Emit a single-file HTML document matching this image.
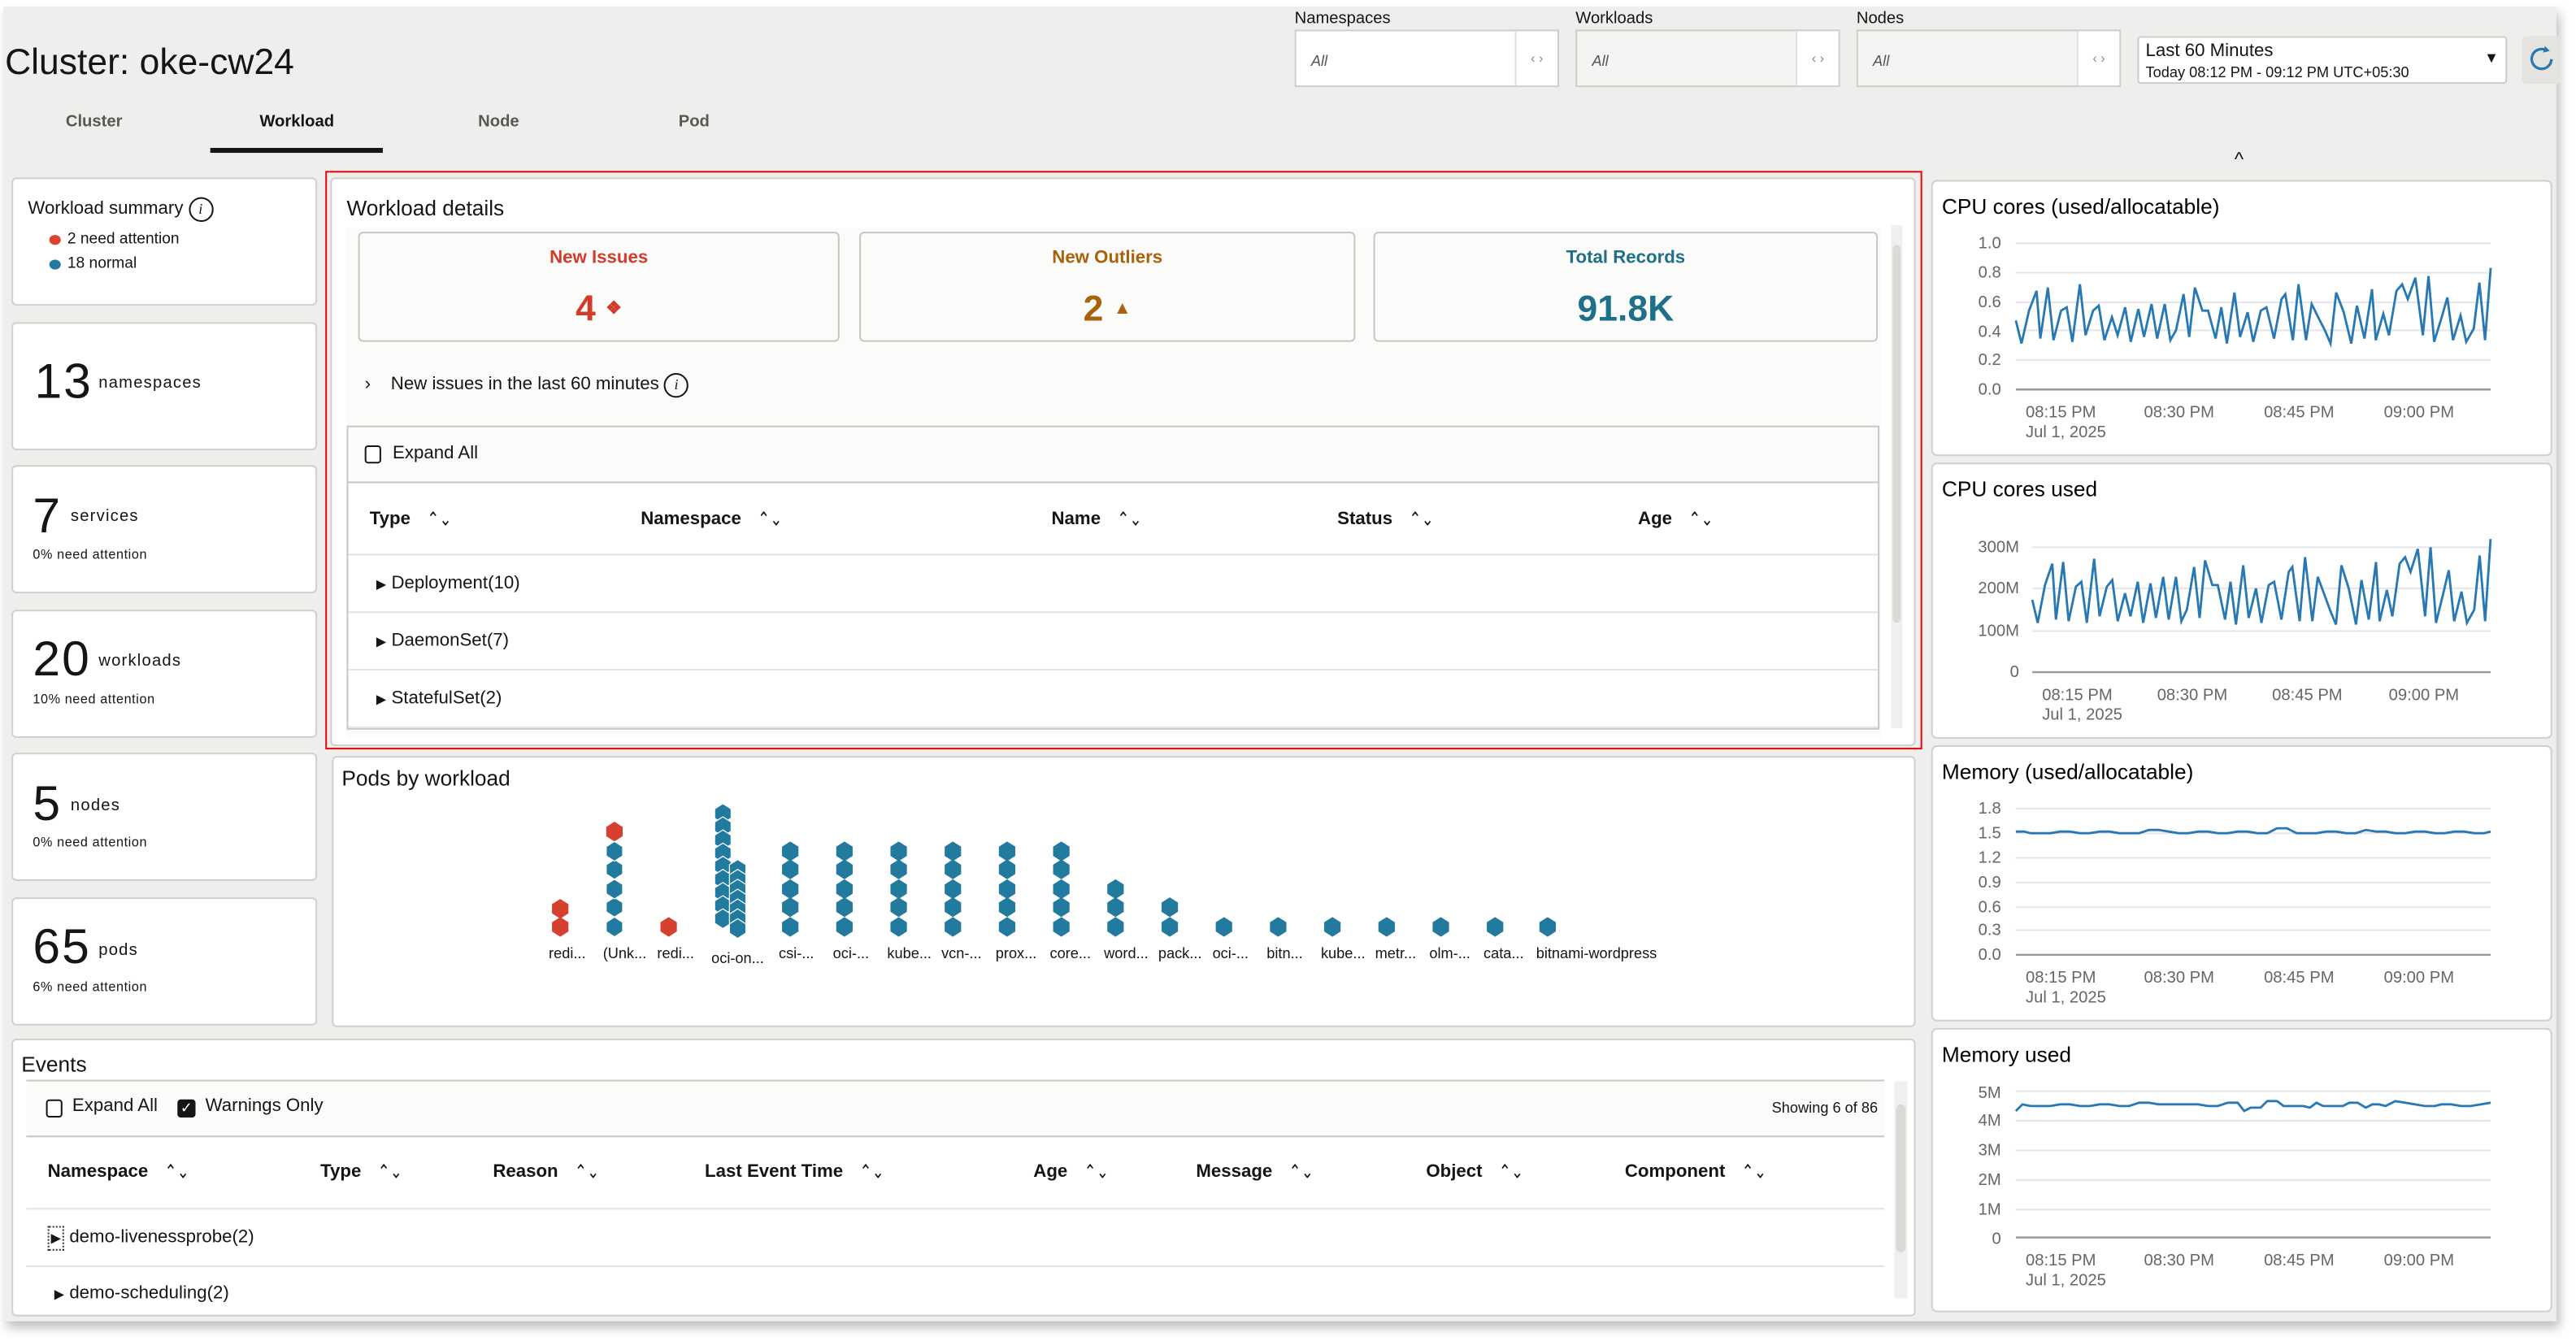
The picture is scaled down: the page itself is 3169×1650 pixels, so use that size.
<!DOCTYPE html>
<html><head><meta charset="utf-8">
<style>
*{box-sizing:border-box;margin:0;padding:0}
html,body{width:3169px;height:1650px;overflow:hidden;background:#fff;font-family:"Liberation Sans",Arial,sans-serif;color:#161513}
#w{position:absolute;left:0;top:0;width:1568px;height:816px;transform-origin:0 0;transform:scale(2.0211,2.0221)}
.bg{position:absolute;left:2px;top:4px;width:1554px;height:800px;background:#efeeec;box-shadow:2px 4px 6px rgba(0,0,0,.25)}
.a{position:absolute}
.card{position:absolute;background:#fff;border:1px solid #d2d0cc;border-radius:3px}
.t{position:absolute;white-space:nowrap}
.lbl{font-size:10px}
.fbox{position:absolute;height:35px;background:#f5f4f2;border:1px solid #cfcdc9;font-size:9px;font-style:italic;color:#555}
.fbox .sp{position:absolute;right:0;top:0;width:26px;height:100%;background:#fff;border-left:1px solid #ddd;font-size:8px;font-style:normal;color:#888;text-align:center;line-height:33px}
.tab{font-size:10px;font-weight:bold;color:#5a5854}
.big{font-size:30px;letter-spacing:1px}
.small{font-size:8px;letter-spacing:.3px}
.unit{font-size:10px;letter-spacing:.6px}
.th{font-size:11px;font-weight:bold}
.sort{font-size:9px;font-weight:normal;margin-left:10px;display:inline-block;transform:scaleY(1.3)}
.row{position:absolute;left:0;right:0;border-top:1px solid #e5e3e0}
.ax{font-size:10px;fill:#666;font-family:"Liberation Sans",Arial,sans-serif}
</style></head><body>
<div id="w">
<div class="bg"></div>
<div class="t" style="left:3px;top:25px;font-size:22px">Cluster: oke-cw24</div>
<div class="t tab" style="left:40px;top:69px">Cluster</div>
<div class="t tab" style="left:158px;top:69px;color:#161513">Workload</div>
<div class="t tab" style="left:291px;top:69px">Node</div>
<div class="t tab" style="left:413px;top:69px">Pod</div>
<div class="a" style="left:128px;top:90px;width:105px;height:3px;background:#161513"></div>

<div class="t lbl" style="left:788px;top:6px">Namespaces</div>
<div class="fbox" style="left:788px;top:18px;width:161px;background:#fff"><span class="t" style="left:9px;top:13px">All</span><div class="sp">‹ ›</div></div>
<div class="t lbl" style="left:959px;top:6px">Workloads</div>
<div class="fbox" style="left:959px;top:18px;width:161px"><span class="t" style="left:9px;top:13px">All</span><div class="sp">‹ ›</div></div>
<div class="t lbl" style="left:1130px;top:6px">Nodes</div>
<div class="fbox" style="left:1130px;top:18px;width:161px"><span class="t" style="left:9px;top:13px">All</span><div class="sp">‹ ›</div></div>
<div class="a" style="left:1301px;top:22px;width:225px;height:29px;background:#fff;border:1px solid #cfcdc9;border-radius:2px">
<div class="t" style="left:4px;top:2px;font-size:11px">Last 60 Minutes</div>
<div class="t" style="left:4px;top:16px;font-size:9px">Today 08:12 PM - 09:12 PM UTC+05:30</div>
<div class="t" style="right:4px;top:7px;font-size:9px">▼</div></div>
<div class="a" style="left:1535px;top:22px;width:24px;height:29px;background:#e4e3e0;border-radius:3px"><svg width="24" height="29"><path d="M18 14a6 6 0 1 1-2.5-5" fill="none" stroke="#2878b4" stroke-width="1.6"/><path d="M14 6l3 3-4 1z" fill="#2878b4"/></svg></div>
<div class="t" style="left:1360px;top:90px;font-size:12px">^</div>

<div class="card" style="left:7px;top:108px;width:186px;height:78px">
<div class="t" style="left:9px;top:11px;font-size:11px">Workload summary <span style="display:inline-block;width:15px;height:15px;border:1px solid #161513;border-radius:50%;font-size:9px;text-align:center;line-height:13px;font-style:italic;font-family:'Liberation Serif',serif">i</span></div>
<div class="a" style="left:22px;top:34px;width:7px;height:6px;border-radius:50%;background:#d9432f"></div>
<div class="t" style="left:33px;top:31px;font-size:9.5px">2 need attention</div>
<div class="a" style="left:22px;top:49px;width:7px;height:6px;border-radius:50%;background:#227b9e"></div>
<div class="t" style="left:33px;top:46px;font-size:9.5px">18 normal</div></div>
<div class="card" style="left:7px;top:196px;width:186px;height:78px"><div class="t big" style="left:13px;top:19px">13</div><div class="t unit" style="left:52px;top:31px">namespaces</div></div>
<div class="card" style="left:7px;top:283px;width:186px;height:78px"><div class="t big" style="left:12px;top:14px">7</div><div class="t unit" style="left:35px;top:25px">services</div><div class="t small" style="left:12px;top:49px">0% need attention</div></div>
<div class="card" style="left:7px;top:371px;width:186px;height:78px"><div class="t big" style="left:12px;top:13px">20</div><div class="t unit" style="left:52px;top:25px">workloads</div><div class="t small" style="left:12px;top:49px">10% need attention</div></div>
<div class="card" style="left:7px;top:458px;width:186px;height:78px"><div class="t big" style="left:12px;top:14px">5</div><div class="t unit" style="left:35px;top:26px">nodes</div><div class="t small" style="left:12px;top:49px">0% need attention</div></div>
<div class="card" style="left:7px;top:546px;width:186px;height:78px"><div class="t big" style="left:12px;top:13px">65</div><div class="t unit" style="left:52px;top:26px">pods</div><div class="t small" style="left:12px;top:49px">6% need attention</div></div>

<div class="card" style="left:201px;top:108px;width:965px;height:346px">
<div class="t" style="left:9px;top:10px;font-size:13px">Workload details</div>
<div class="a" style="left:9px;top:30px;width:934px;height:310px;background:#fbfbf9"></div>
<div class="card" style="left:16px;top:32px;width:293px;height:67px;background:#fbfbf9;border-color:#c9c7c3"><div class="t" style="left:0;right:0;text-align:center;top:9px;font-size:11px;font-weight:bold;color:#d13c2a">New Issues</div><div class="t" style="left:0;right:0;text-align:center;top:33px;font-size:22px;font-weight:bold;color:#d13c2a">4 <span style="font-size:11px;vertical-align:4px">❖</span></div></div>
<div class="card" style="left:321px;top:32px;width:302px;height:67px;background:#fbfbf9;border-color:#c9c7c3"><div class="t" style="left:0;right:0;text-align:center;top:9px;font-size:11px;font-weight:bold;color:#a8620c">New Outliers</div><div class="t" style="left:0;right:0;text-align:center;top:33px;font-size:22px;font-weight:bold;color:#a8620c">2 <span style="font-size:11px;vertical-align:4px">▲</span></div></div>
<div class="card" style="left:634px;top:32px;width:307px;height:67px;background:#fbfbf9;border-color:#c9c7c3"><div class="t" style="left:0;right:0;text-align:center;top:9px;font-size:11px;font-weight:bold;color:#1d6f8a">Total Records</div><div class="t" style="left:0;right:0;text-align:center;top:33px;font-size:22px;font-weight:bold;color:#1d6f8a">91.8K</div></div>
<div class="t" style="left:20px;top:118px;font-size:11px">›&nbsp;&nbsp;&nbsp; New issues in the last 60 minutes <span style="display:inline-block;width:15px;height:15px;border:1px solid #161513;border-radius:50%;font-size:9px;text-align:center;line-height:13px;font-style:italic;font-family:'Liberation Serif',serif">i</span></div>
<div class="a" style="left:9px;top:150px;width:933px;height:185px;background:#fff;border:1px solid #c9c7c3;overflow:hidden">
<div class="a" style="left:0;top:0;right:0;height:34px;background:#fbfbf9;border-bottom:1px solid #c9c7c3"></div>
<div class="a" style="left:10px;top:11px;width:10px;height:11px;border:1px solid #161513;border-radius:2px;background:#fff"></div>
<div class="t" style="left:27px;top:10px;font-size:11px">Expand All</div>
<div class="t th" style="left:13px;top:50px">Type<span class="sort">⌃⌄</span></div>
<div class="t th" style="left:178px;top:50px">Namespace<span class="sort">⌃⌄</span></div>
<div class="t th" style="left:428px;top:50px">Name<span class="sort">⌃⌄</span></div>
<div class="t th" style="left:602px;top:50px">Status<span class="sort">⌃⌄</span></div>
<div class="t th" style="left:785px;top:50px">Age<span class="sort">⌃⌄</span></div>
<div class="row" style="top:77px"></div>
<div class="t" style="left:17px;top:89px;font-size:11px"><span style="font-size:8px">▶</span> Deployment(10)</div>
<div class="row" style="top:112px"></div>
<div class="t" style="left:17px;top:124px;font-size:11px"><span style="font-size:8px">▶</span> DaemonSet(7)</div>
<div class="row" style="top:147px"></div>
<div class="t" style="left:17px;top:159px;font-size:11px"><span style="font-size:8px">▶</span> StatefulSet(2)</div>
<div class="row" style="top:182px"></div>
</div>
<div class="a" style="left:949px;top:28px;width:7px;height:306px;background:#f1f0ee"><div class="a" style="left:1px;top:12px;width:5px;height:230px;background:#dcdad6;border-radius:3px"></div></div>
</div>
<div class="a" style="left:198px;top:104px;width:972px;height:352px;border:1.5px solid #e8080c"></div>

<div class="card" style="left:202px;top:460px;width:964px;height:165px">
<div class="t" style="left:5px;top:5px;font-size:13px">Pods by workload</div></div>
<svg class="a" style="left:0;top:0" width="1168" height="630">
<defs><polygon id="h" points="0,-6 5,-2.8 5,2.8 0,6 -5,2.8 -5,-2.8"/></defs>
<g fill="#d64030"><use href="#h" x="341" y="564"/><use href="#h" x="341" y="553"/><use href="#h" x="374" y="506"/><use href="#h" x="407" y="564"/></g>
<g fill="#227b9e" stroke="#fff" stroke-width=".6">
<use href="#h" x="374" y="564"/><use href="#h" x="374" y="552"/><use href="#h" x="374" y="541"/><use href="#h" x="374" y="529"/><use href="#h" x="374" y="518"/>
<use href="#h" x="440" y="495"/><use href="#h" x="440" y="503"/><use href="#h" x="440" y="511"/><use href="#h" x="440" y="519"/><use href="#h" x="440" y="527"/><use href="#h" x="440" y="535"/><use href="#h" x="440" y="543"/><use href="#h" x="440" y="551"/><use href="#h" x="440" y="559"/>
<use href="#h" x="449" y="529"/><use href="#h" x="449" y="535"/><use href="#h" x="449" y="541"/><use href="#h" x="449" y="547"/><use href="#h" x="449" y="553"/><use href="#h" x="449" y="559"/><use href="#h" x="449" y="565"/>
</g>
<g fill="#227b9e" id="c5"><use href="#h" x="481" y="564"/><use href="#h" x="481" y="552"/><use href="#h" x="481" y="541"/><use href="#h" x="481" y="529"/><use href="#h" x="481" y="518"/></g>
<use href="#c5" x="33"/><use href="#c5" x="66"/><use href="#c5" x="99"/><use href="#c5" x="132"/><use href="#c5" x="165"/>
<g fill="#227b9e"><use href="#h" x="679" y="564"/><use href="#h" x="679" y="552"/><use href="#h" x="679" y="541"/><use href="#h" x="712" y="564"/><use href="#h" x="712" y="552"/>
<use href="#h" x="745" y="564"/><use href="#h" x="778" y="564"/><use href="#h" x="811" y="564"/><use href="#h" x="844" y="564"/><use href="#h" x="877" y="564"/><use href="#h" x="910" y="564"/><use href="#h" x="942" y="564"/></g>
<g font-size="9" font-family="Liberation Sans,Arial,sans-serif" fill="#161513">
<text x="334" y="583">redi...</text><text x="367" y="583">(Unk...</text><text x="400" y="583">redi...</text><text x="433" y="586">oci-on...</text><text x="474" y="583">csi-...</text><text x="507" y="583">oci-...</text><text x="540" y="583">kube...</text><text x="573" y="583">vcn-...</text><text x="606" y="583">prox...</text><text x="639" y="583">core...</text><text x="672" y="583">word...</text><text x="705" y="583">pack...</text><text x="738" y="583">oci-...</text><text x="771" y="583">bitn...</text><text x="804" y="583">kube...</text><text x="837" y="583">metr...</text><text x="870" y="583">olm-...</text><text x="903" y="583">cata...</text><text x="935" y="583">bitnami-wordpress</text></g>
</svg>

<div class="card" style="left:7px;top:632px;width:1159px;height:169px;overflow:hidden">
<div class="t" style="left:5px;top:7px;font-size:13px">Events</div>
<div class="a" style="left:8px;top:24px;width:1131px;height:142px;background:#fff;border-top:1px solid #c9c7c3"></div>
<div class="a" style="left:8px;top:25px;width:1131px;height:34px;background:#fbfbf9;border-bottom:1px solid #c9c7c3"></div>
<div class="a" style="left:20px;top:36px;width:10px;height:11px;border:1px solid #161513;border-radius:2px;background:#fff"></div>
<div class="t" style="left:36px;top:34px;font-size:11px">Expand All</div>
<div class="a" style="left:100px;top:36px;width:11px;height:11px;background:#161513;border-radius:2px;color:#fff;font-size:9px;text-align:center;line-height:11px">✓</div>
<div class="t" style="left:117px;top:34px;font-size:11px">Warnings Only</div>
<div class="t" style="right:22px;top:36px;font-size:9px">Showing 6 of 86</div>
<div class="t th" style="left:21px;top:74px">Namespace<span class="sort">⌃⌄</span></div>
<div class="t th" style="left:187px;top:74px">Type<span class="sort">⌃⌄</span></div>
<div class="t th" style="left:292px;top:74px">Reason<span class="sort">⌃⌄</span></div>
<div class="t th" style="left:421px;top:74px">Last Event Time<span class="sort">⌃⌄</span></div>
<div class="t th" style="left:621px;top:74px">Age<span class="sort">⌃⌄</span></div>
<div class="t th" style="left:720px;top:74px">Message<span class="sort">⌃⌄</span></div>
<div class="t th" style="left:860px;top:74px">Object<span class="sort">⌃⌄</span></div>
<div class="t th" style="left:981px;top:74px">Component<span class="sort">⌃⌄</span></div>
<div class="a" style="left:8px;top:102px;width:1131px;border-top:1px solid #e5e3e0"></div>
<div class="t" style="left:21px;top:113px;font-size:11px"><span style="display:inline-block;border:1px dotted #333;font-size:8px;padding:2px 1px">▶</span> demo-livenessprobe(2)</div>
<div class="a" style="left:8px;top:137px;width:1131px;border-top:1px solid #e5e3e0"></div>
<div class="t" style="left:25px;top:148px;font-size:11px"><span style="font-size:8px">▶</span> demo-scheduling(2)</div>
<div class="a" style="left:1145px;top:25px;width:8px;height:132px;background:#f1f0ee"><div class="a" style="left:1px;top:14px;width:6px;height:90px;background:#dcdad6;border-radius:3px"></div></div>
</div>

<svg class="a" style="left:1170px;top:105px" width="390" height="700">
<g font-family="Liberation Sans,Arial,sans-serif">
<rect x="6" y="5" width="377" height="167" rx="3" fill="#fff" stroke="#d2d0cc"/>
<rect x="6" y="177" width="377" height="167" rx="3" fill="#fff" stroke="#d2d0cc"/>
<rect x="6" y="349" width="377" height="167" rx="3" fill="#fff" stroke="#d2d0cc"/>
<rect x="6" y="521" width="377" height="172" rx="3" fill="#fff" stroke="#d2d0cc"/>
<text x="12" y="25" font-size="13">CPU cores (used/allocatable)</text>
<text x="12" y="197" font-size="13">CPU cores used</text>
<text x="12" y="369" font-size="13">Memory (used/allocatable)</text>
<text x="12" y="541" font-size="13">Memory used</text>
<g stroke="#e6e6ea" stroke-width="1">
<line x1="57" x2="346" y1="43" y2="43"/><line x1="57" x2="346" y1="61" y2="61"/><line x1="57" x2="346" y1="79" y2="79"/><line x1="57" x2="346" y1="96" y2="96"/><line x1="57" x2="346" y1="114" y2="114"/>
<line x1="67" x2="346" y1="228" y2="228"/><line x1="67" x2="346" y1="253" y2="253"/><line x1="67" x2="346" y1="279" y2="279"/>
<line x1="57" x2="346" y1="387" y2="387"/><line x1="57" x2="346" y1="402" y2="402"/><line x1="57" x2="346" y1="417" y2="417"/><line x1="57" x2="346" y1="432" y2="432"/><line x1="57" x2="346" y1="447" y2="447"/><line x1="57" x2="346" y1="461" y2="461"/>
<line x1="57" x2="346" y1="559" y2="559"/><line x1="57" x2="346" y1="577" y2="577"/><line x1="57" x2="346" y1="595" y2="595"/><line x1="57" x2="346" y1="613" y2="613"/><line x1="57" x2="346" y1="631" y2="631"/></g>
<g stroke="#999" stroke-width="1.2"><line x1="57" x2="346" y1="132" y2="132"/><line x1="67" x2="346" y1="304" y2="304"/><line x1="57" x2="346" y1="476" y2="476"/><line x1="57" x2="346" y1="648" y2="648"/></g>
<g class="ax" text-anchor="end" font-size="10" fill="#666">
<text x="48" y="46">1.0</text><text x="48" y="64">0.8</text><text x="48" y="82">0.6</text><text x="48" y="100">0.4</text><text x="48" y="117">0.2</text><text x="48" y="135">0.0</text>
<text x="59" y="231">300M</text><text x="59" y="256">200M</text><text x="59" y="282">100M</text><text x="59" y="307">0</text>
<text x="48" y="390">1.8</text><text x="48" y="405">1.5</text><text x="48" y="420">1.2</text><text x="48" y="435">0.9</text><text x="48" y="450">0.6</text><text x="48" y="464">0.3</text><text x="48" y="479">0.0</text>
<text x="48" y="563">5M</text><text x="48" y="580">4M</text><text x="48" y="598">3M</text><text x="48" y="616">2M</text><text x="48" y="634">1M</text><text x="48" y="652">0</text></g>
<g class="ax" font-size="10" fill="#666">
<text x="63" y="149">08:15 PM</text><text x="63" y="161">Jul 1, 2025</text><text x="135" y="149">08:30 PM</text><text x="208" y="149">08:45 PM</text><text x="281" y="149">09:00 PM</text>
<text x="73" y="321">08:15 PM</text><text x="73" y="333">Jul 1, 2025</text><text x="143" y="321">08:30 PM</text><text x="213" y="321">08:45 PM</text><text x="284" y="321">09:00 PM</text>
<text x="63" y="493">08:15 PM</text><text x="63" y="505">Jul 1, 2025</text><text x="135" y="493">08:30 PM</text><text x="208" y="493">08:45 PM</text><text x="281" y="493">09:00 PM</text>
<text x="63" y="665">08:15 PM</text><text x="63" y="677">Jul 1, 2025</text><text x="135" y="665">08:30 PM</text><text x="208" y="665">08:45 PM</text><text x="281" y="665">09:00 PM</text></g>
<g fill="none" stroke="#2878b4" stroke-width="1.4">
<polyline transform="translate(57,0) scale(1.147,1) translate(-57,0)" vector-effect="non-scaling-stroke" points="57,90 60,104 64,84 68,72 70,101 74,70 77,102 81,84 84,82 87,103 91,68 94,99 98,84 101,81 104,102 108,88 111,99 115,82 118,103 122,83 125,100 129,80 132,101 136,80 139,102 142,96 146,74 149,100 152,70 156,84 159,84 163,101 166,82 169,104 173,73 176,100 180,85 183,103 187,84 190,82 194,101 198,77 200,74 204,102 207,68 211,102 214,80 217,87 221,96 224,104 227,73 231,85 235,104 238,81 242,101 246,71 248,102 252,86 255,99 259,72 262,68 265,77 269,64 273,99 276,63 279,103 283,88 286,76 289,102 293,87 296,103 300,95 303,67 306,102 309,58"/>
<polyline transform="translate(67,0) scale(1.107,1) translate(-67,0)" vector-effect="non-scaling-stroke" points="67,260 70,274 74,251 78,238 80,272 84,237 87,273 91,252 94,249 97,274 101,235 104,270 108,252 111,248 114,273 118,256 121,270 125,249 128,274 132,250 135,271 139,246 142,272 146,246 149,273 152,266 156,240 159,271 162,236 166,251 169,251 173,272 176,249 179,275 183,239 186,271 190,253 193,274 197,251 200,249 204,272 208,243 210,240 214,273 217,234 221,273 224,246 227,255 231,267 234,275 237,239 241,253 245,275 248,248 252,272 256,237 258,273 262,254 265,270 269,238 272,234 275,243 279,229 283,270 286,228 289,274 293,256 296,242 299,273 303,255 306,274 310,266 313,233 316,273 319,223"/>
<polyline points="57,401 62,401 66,402 72,402 78,402 84,401 90,401 96,402 102,402 108,401 114,401 120,402 126,402 132,402 138,400 144,400 150,401 156,402 162,402 168,401 174,401 180,402 186,402 192,401 198,401 204,402 210,402 216,399 222,399 228,402 234,402 240,402 246,401 252,401 258,402 264,402 270,400 276,401 282,401 288,402 294,402 300,401 306,401 312,402 318,402 324,401 330,401 336,402 342,402 346,401"/>
<polyline points="57,571 61,567 66,568 72,568 78,568 84,567 90,567 96,568 102,568 108,567 114,567 120,568 126,568 132,566 138,566 144,567 150,567 156,567 162,567 168,567 174,568 180,568 186,566 192,566 196,571 200,569 206,569 210,565 216,565 220,568 226,568 232,568 236,569 240,566 244,568 250,568 256,568 260,566 265,566 270,569 274,567 278,567 282,568 288,565 294,566 300,567 306,568 312,568 316,567 322,567 328,568 334,568 340,567 346,566"/>
</g></g></svg>
</div>
</body></html>
